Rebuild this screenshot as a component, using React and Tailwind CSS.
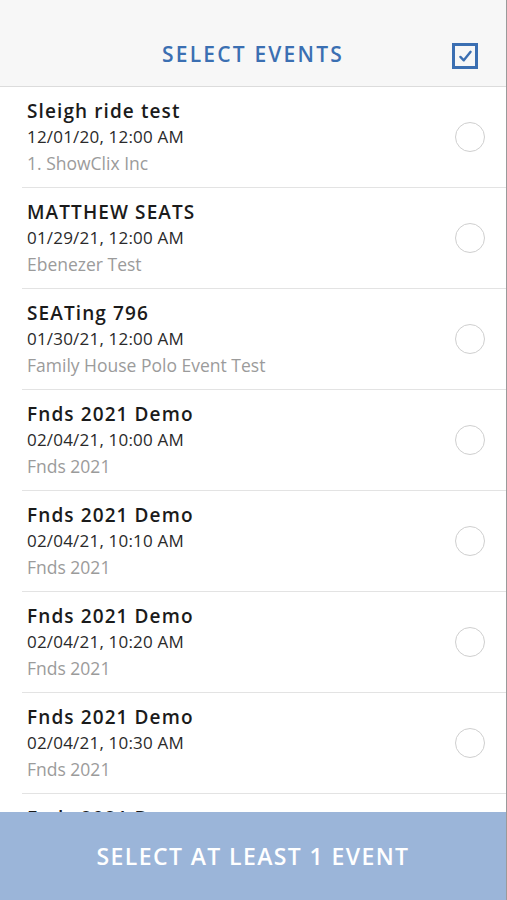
import React from 'react';

const events = [
  { name: 'Sleigh ride test', date: '12/01/20, 12:00 AM', org: '1. ShowClix Inc' },
  { name: 'MATTHEW SEATS', date: '01/29/21, 12:00 AM', org: 'Ebenezer Test' },
  { name: 'SEATing 796', date: '01/30/21, 12:00 AM', org: 'Family House Polo Event Test' },
  { name: 'Fnds 2021 Demo', date: '02/04/21, 10:00 AM', org: 'Fnds 2021' },
  { name: 'Fnds 2021 Demo', date: '02/04/21, 10:10 AM', org: 'Fnds 2021' },
  { name: 'Fnds 2021 Demo', date: '02/04/21, 10:20 AM', org: 'Fnds 2021' },
  { name: 'Fnds 2021 Demo', date: '02/04/21, 10:30 AM', org: 'Fnds 2021' },
  { name: 'Fnds 2021 Demo', date: '02/04/21, 10:40 AM', org: 'Fnds 2021' },
];

const EventRow = ({ event }) => (
  <div className="pl-[22px]">
    <div className="flex items-center border-b border-[#e3e3e3] py-[11px] pl-[5px] pr-[21px]">
      <div className="flex-1 flex flex-col">
        <span className="text-[19px] leading-[26px] font-semibold tracking-[1.1px] text-[#1b1b1b]">{event.name}</span>
        <span className="text-[17px] leading-[26px] tracking-[0.2px] text-[#2a2a2a]">{event.date}</span>
        <span className="text-[17.5px] leading-[26px] text-[#9b9b9b]">{event.org}</span>
      </div>
      <div className="w-[30px] h-[30px] rounded-full border-[1.5px] border-[#cfcfcf]" />
    </div>
  </div>
);

const App = () => {
  return (
    <div className="relative h-[900px] w-[507px] overflow-hidden bg-white border-r border-[#9a9a9a] font-['Open_Sans',sans-serif]">
      <div className="h-[87px] bg-[#f7f7f7] border-b border-[#dcdcdc] flex items-center pt-[24px] relative">
        <h1 className="flex-1 text-center text-[21px] font-semibold tracking-[2.2px] text-[#3b6fb2]">SELECT EVENTS</h1>
        <div className="absolute right-[28px] top-[43px] w-[26px] h-[26px] border-[3px] border-[#3b6fb2] flex items-center justify-center">
          <svg viewBox="0 0 20 20" className="w-[17px] h-[17px]">
            <path d="M4 10.5 L8 14.5 L16 4.5" fill="none" stroke="#3b6fb2" strokeWidth="2.8" strokeLinecap="round" strokeLinejoin="round" />
          </svg>
        </div>
      </div>
      <div className="flex flex-col">
        {events.map((e, i) => (
          <EventRow key={i} event={e} />
        ))}
      </div>
      <button className="absolute left-0 right-0 bottom-0 h-[88px] bg-[#9bb5d9] text-white text-[23px] font-semibold tracking-[1.4px] flex items-center justify-center">
        SELECT AT LEAST 1 EVENT
      </button>
    </div>
  );
};

export default App;
